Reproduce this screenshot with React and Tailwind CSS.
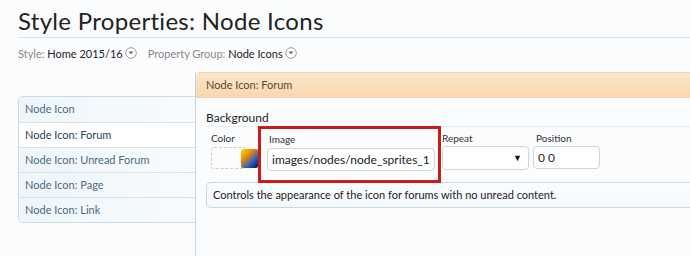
import React from "react";

function Chevron() {
  return (
    <svg width="12" height="12" viewBox="0 0 12 12" className="inline-block ml-[2px] -mt-[2px] align-middle">
      <circle cx="6" cy="6" r="5.3" fill="#fff" stroke="#9a9a9a" strokeWidth="1" />
      <path d="M3.4 4.6 L8.6 4.6 L6 7.6 Z" fill="#777" />
    </svg>
  );
}

export default function App() {
  const items = ["Node Icon", "Node Icon: Forum", "Node Icon: Unread Forum", "Node Icon: Page", "Node Icon: Link"];
  return (
    <div className="w-[690px] h-[256px] overflow-hidden bg-[#fbfcfe] pl-[18px] font-['Lato',sans-serif]">
      <h1 className="text-[24px] leading-[30px] pt-[6px] text-[#222] tracking-[0.3px]">Style Properties: Node Icons</h1>
      <div className="mt-[1px] border-b border-[#d6e4ea]"></div>
      <div className="mt-[9px] text-[11px] leading-[14px] text-[#888] flex items-center">
        <span>Style: <span className="text-[#222]">Home 2015/16</span></span>
        <Chevron />
        <span className="ml-[11px]">Property Group: <span className="text-[#222]">Node Icons</span></span>
        <Chevron />
      </div>
      <div className="flex mt-[11px]">
        <div className="w-[177px] mt-[24px] shrink-0">
          <div className="border border-r-0 border-[#c6dce6] rounded-l-[5px] overflow-hidden">
            {items.map((t, i) => (
              <div
                key={t}
                className={
                  "h-[25px] leading-[24px] pl-[6px] text-[11px] " +
                  (i > 0 ? "border-t border-[#d2e3ea] " : "") +
                  (i === 1 ? "bg-white text-[#2a3f52]" : "bg-gradient-to-r from-[#eef6fa] to-[#f8fbfd] text-[#4a6a80]")
                }
              >
                {t}
              </div>
            ))}
          </div>
        </div>
        <div className="flex-1 h-[200px] border-l border-[#c8d6dc]">
          <div className="h-[26px] rounded-tl-[5px] border-t border-[#c3ced3] bg-gradient-to-b from-[#f8e7cc] to-[#fbd6ad] pl-[10px] text-[11px] leading-[24px] text-[#5c4633] border-b border-[#f1d3b0]">
            Node Icon: Forum
          </div>
          <div className="pl-[10px] pt-[13px] text-[12px] leading-[14px] text-[#222]">Background</div>
          <div className="ml-[10px] mt-[1px] border-t border-[#e6eef2] flex">
            <div className="pl-[5px] pt-[5px] w-[52px]">
              <div className="text-[10px] leading-[12px] text-[#333]">Color</div>
              <div className="mt-[3px] flex items-center">
                <div className="w-[38px] h-[22px] border border-dashed border-[#ccc] rounded-[3px]"></div>
                <div className="w-[18px] h-[19px] -ml-[5px] rounded-[2px] bg-[linear-gradient(135deg,#f4e200_0%,#f08a00_35%,#1c5cc8_70%,#111_100%)]"></div>
              </div>
            </div>
            <div className="-mt-[1px] w-[183px] h-[57px] border-[3px] border-[#cc1a1a] pl-[8px] pt-[4px]">
              <div className="text-[10px] leading-[12px] text-[#333]">Image</div>
              <div className="mt-[3px] -ml-[2px] w-[168px] h-[23px] border border-[#cdd6db] rounded-[4px] bg-white pl-[4px] text-[12px] leading-[21px] text-[#222] whitespace-nowrap overflow-hidden">
                images/nodes/node_sprites_1
              </div>
            </div>
            <div className="pl-[1px] pt-[5px]">
              <div className="text-[10px] leading-[12px] text-[#333]">Repeat</div>
              <div className="mt-[2px] w-[87px] h-[24px] border border-[#cdd6db] rounded-[4px] bg-white flex items-center justify-end pr-[6px] text-[9px] text-[#111]">▼</div>
            </div>
            <div className="pl-[4px] pt-[5px]">
              <div className="text-[10px] leading-[12px] text-[#333] pl-[3px]">Position</div>
              <div className="mt-[2px] w-[67px] h-[23px] border border-[#cdd6db] rounded-[4px] bg-white pl-[4px] text-[12px] leading-[21px] text-[#222]">0 0</div>
            </div>
          </div>
          <div className="ml-[10px] mt-[-1px] h-[26px] border border-[#c8d6de] rounded-l-[5px] border-r-0 bg-gradient-to-b from-[#fbfdfe] to-[#f3f8fb] pl-[6px] text-[11px] leading-[24px] text-[#222]">
            Controls the appearance of the icon for forums with no unread content.
          </div>
        </div>
      </div>
    </div>
  );
}
